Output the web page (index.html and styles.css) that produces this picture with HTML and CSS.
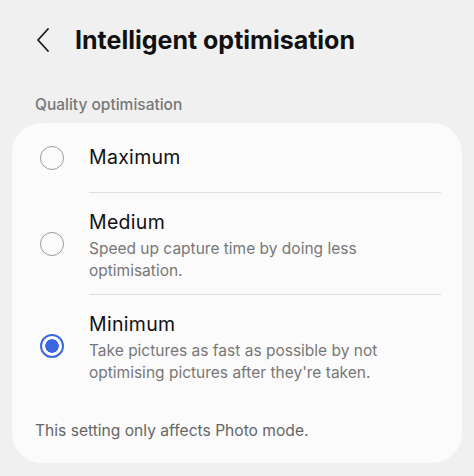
FILE: index.html
```html
<!DOCTYPE html>
<html lang="en">
<head>
  <meta charset="UTF-8">
  <meta name="viewport" content="width=device-width, initial-scale=1.0">
  <title>Intelligent optimisation</title>
  <link rel="stylesheet" href="styles.css">
</head>
<body>
  <div class="header">
    <svg class="back" width="16" height="26" viewBox="0 0 16 26">
      <path d="M13 2 L3 13 L13 24" fill="none" stroke="#1a1a1a" stroke-width="1.8" stroke-linecap="round" stroke-linejoin="round"/>
    </svg>
    <h1 class="title">Intelligent optimisation</h1>
  </div>

  <div class="section-label">Quality optimisation</div>

  <div class="card">
    <div class="option">
      <span class="radio"></span>
      <div class="option-text">
        <div class="option-title">Maximum</div>
      </div>
    </div>
    <div class="option">
      <span class="radio"></span>
      <div class="option-text">
        <div class="option-title">Medium</div>
        <div class="option-desc">Speed up capture time by doing less optimisation.</div>
      </div>
    </div>
    <div class="option">
      <span class="radio checked"></span>
      <div class="option-text last">
        <div class="option-title">Minimum</div>
        <div class="option-desc">Take pictures as fast as possible by not optimising pictures after they're taken.</div>
      </div>
    </div>
    <div class="note">This setting only affects Photo mode.</div>
  </div>
</body>
</html>
```

FILE: styles.css
```css
body {
  margin: 0;
  background: #f0f0f0;
  font-family: Inter, "Noto Sans", sans-serif;
  color: #111;
  height: 476px;
  overflow: hidden;
}
.header {
  display: flex;
  align-items: center;
  height: 80px;
  padding-left: 35px;
}
.back {
  margin-right: 24px;
}
.title {
  margin: 0;
  font-size: 25px;
  font-weight: 700;
}
.section-label {
  padding: 15px 0 0 35px;
  height: 28px;
  font-size: 15.5px;
  font-weight: 500;
  color: #777;
}
.card {
  margin: 0 12px;
  background: #fbfbfb;
  border-radius: 30px;
  height: 340px;
}
.option {
  display: flex;
  align-items: center;
  padding-left: 28px;
}
.radio {
  flex: none;
  box-sizing: border-box;
  width: 24px;
  height: 24px;
  border: 1.6px solid #9a9a9a;
  border-radius: 50%;
  margin-right: 25px;
}
.radio.checked {
  border: 2.5px solid #3b67e3;
  background: radial-gradient(circle, #3b67e3 0 6.5px, transparent 7px);
}
.option-text {
  flex: 1;
  margin-right: 21px;
  padding: 17px 0 12px;
  border-bottom: 1px solid #dedede;
}
.option-text.last {
  border-bottom: none;
}
.option:first-child .option-text {
  padding: 22px 0 23px;
}
.option-title {
  font-size: 19.5px;
  line-height: 24px;
  letter-spacing: 0.3px;
}
.option-desc {
  margin-top: 4px;
  font-size: 15.5px;
  line-height: 22px;
  color: #777;
  padding-right: 60px;
}
.note {
  padding: 25px 0 0 23px;
  font-size: 15.6px;
  color: #666;
}
```
